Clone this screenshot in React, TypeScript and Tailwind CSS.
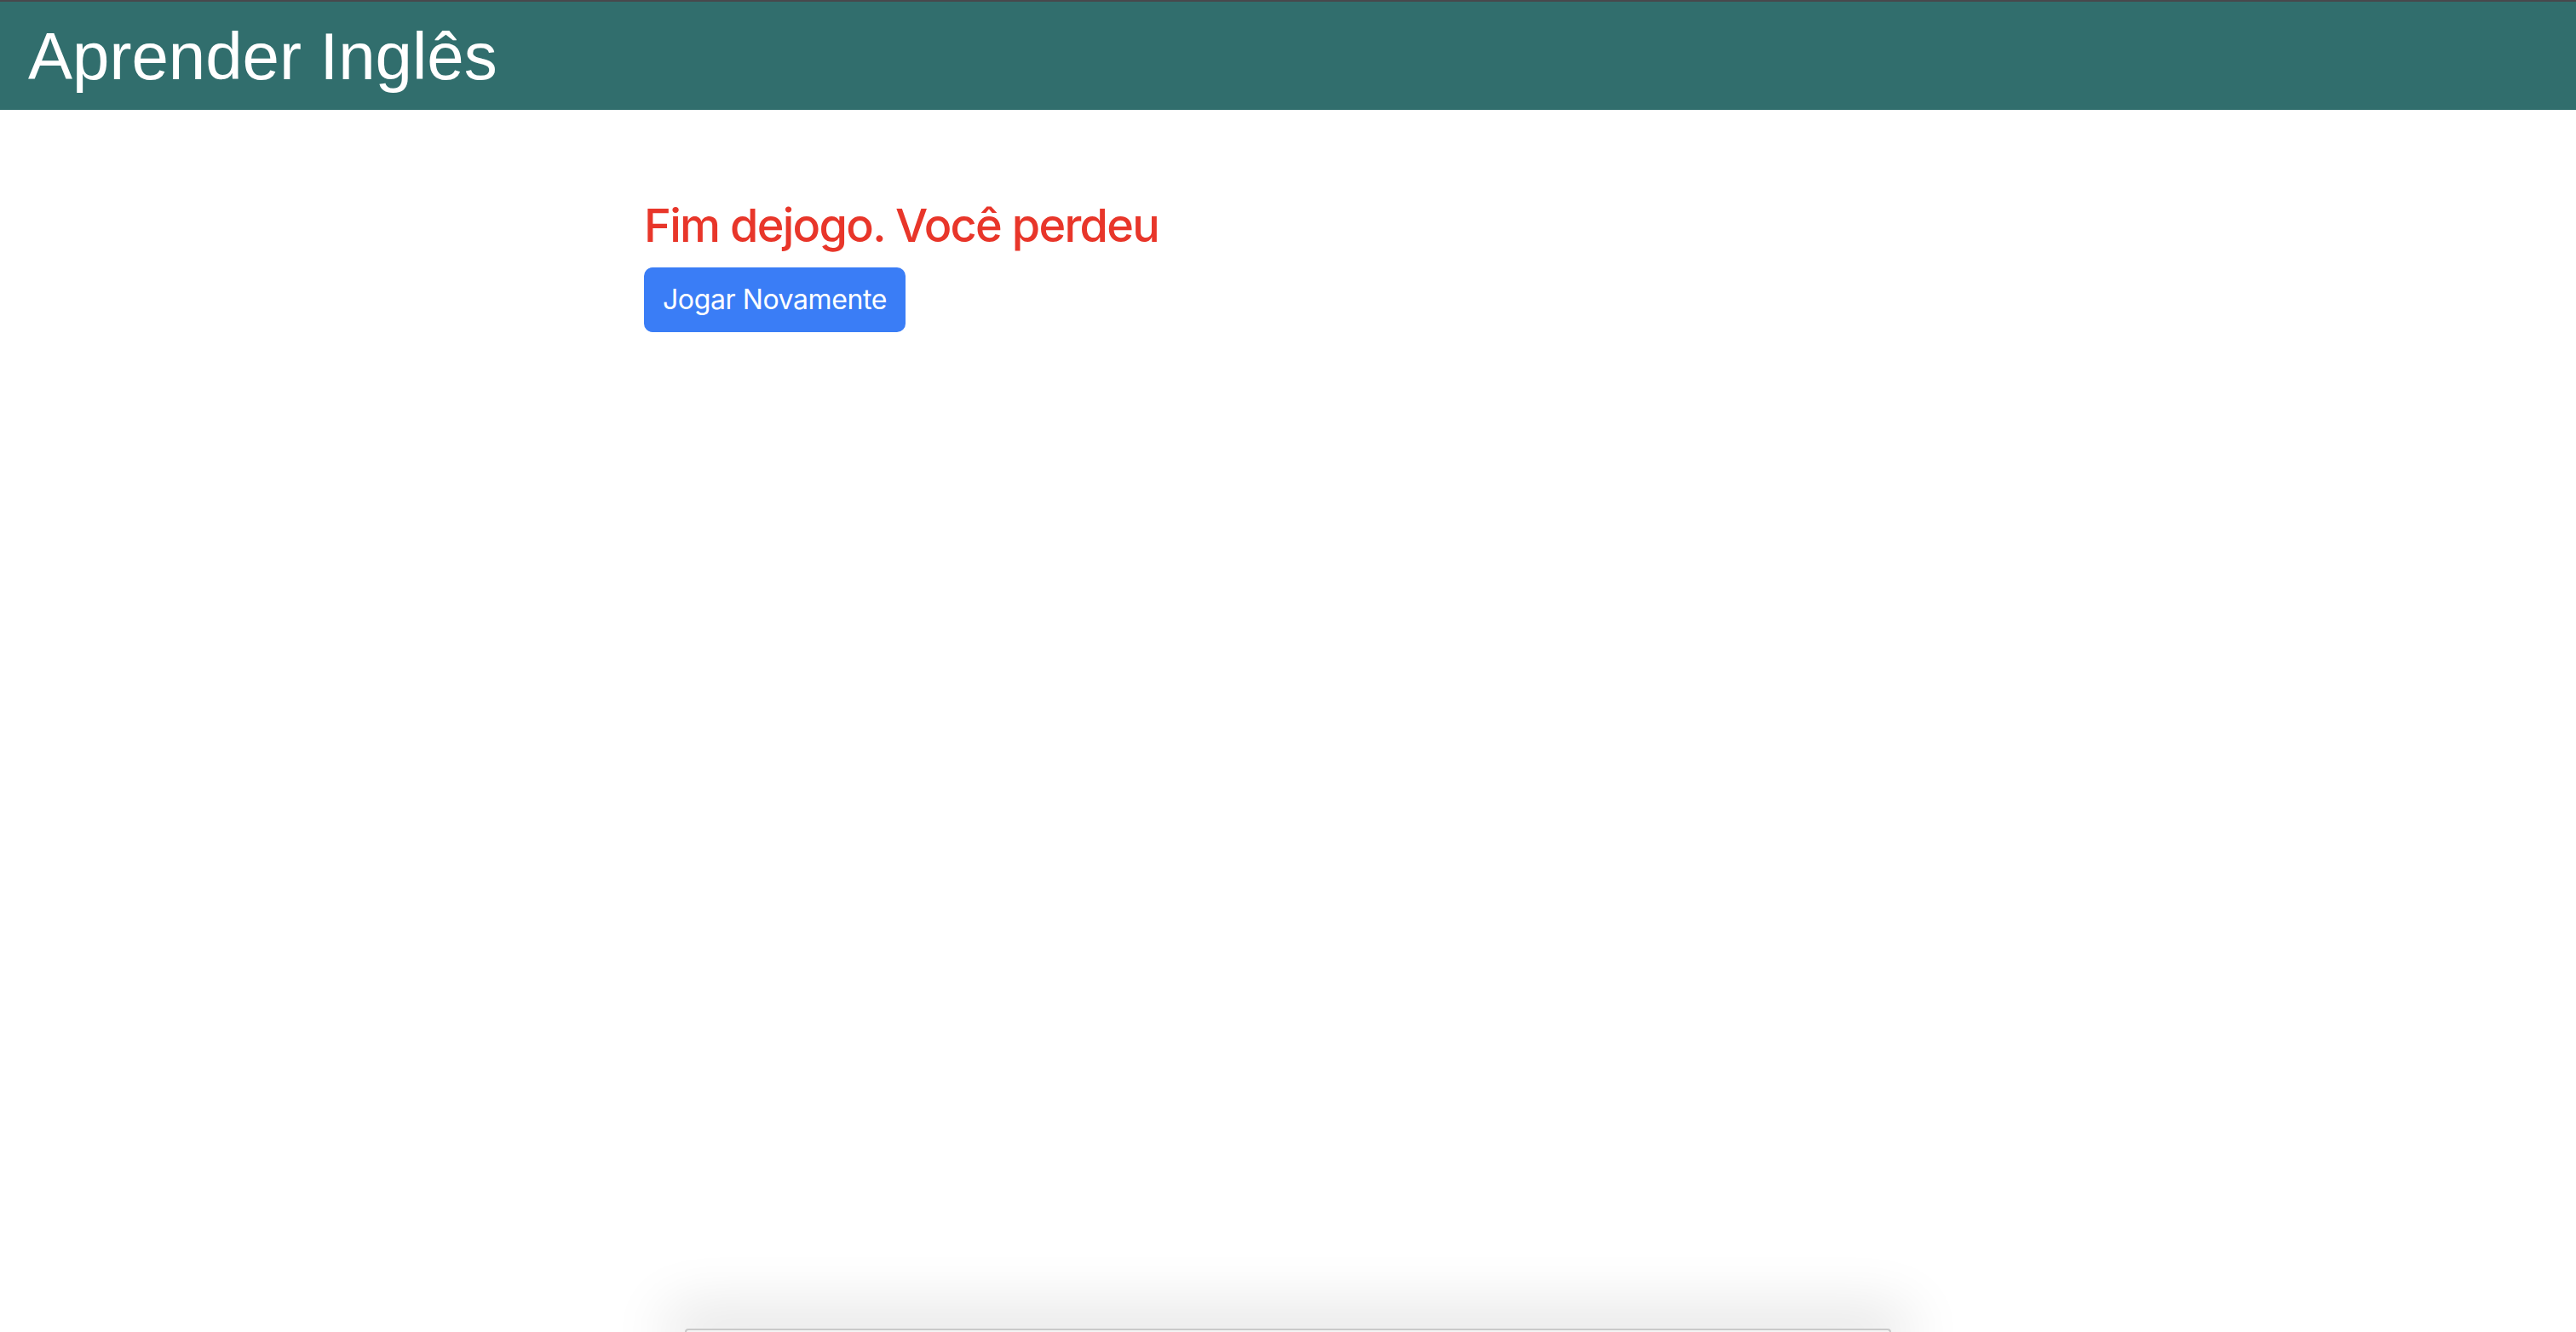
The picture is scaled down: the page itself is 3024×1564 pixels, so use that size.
export default function App() {
  return (
    <div className="flex h-[1564px] flex-col overflow-hidden bg-white">
      <header className="flex h-[129px] items-center border-t-2 border-[#48484c] bg-[#316e6d] px-[33px]">
        <h1 className="font-['Liberation_Sans',Arial,sans-serif] text-[78px] leading-none text-white">
          Aprender Inglês
        </h1>
      </header>

      <main className="flex-1">
        <div className="ml-[25%] w-1/2 pt-[104px] font-['Inter','Noto_Sans',sans-serif]">
          <h3 className="mb-4 text-[54px] font-medium leading-[1.2] tracking-[-1.7px] text-[#e8362a]">
            Fim dejogo. Você perdeu
          </h3>
          <button className="h-[76px] rounded-[10px] bg-[#3a7df6] px-[22px] text-[32px] leading-[1.5] tracking-[-0.4px] text-white">
            Jogar Novamente
          </button>
        </div>
      </main>

      <div className="mx-auto h-[4px] w-[1416px] shrink-0 rounded-t-[14px] border-x-2 border-t-2 border-[#c9c9c9] bg-[#f4f4f4] shadow-[0_0_70px_20px_rgba(0,0,0,0.14)]" />
    </div>
  );
}
